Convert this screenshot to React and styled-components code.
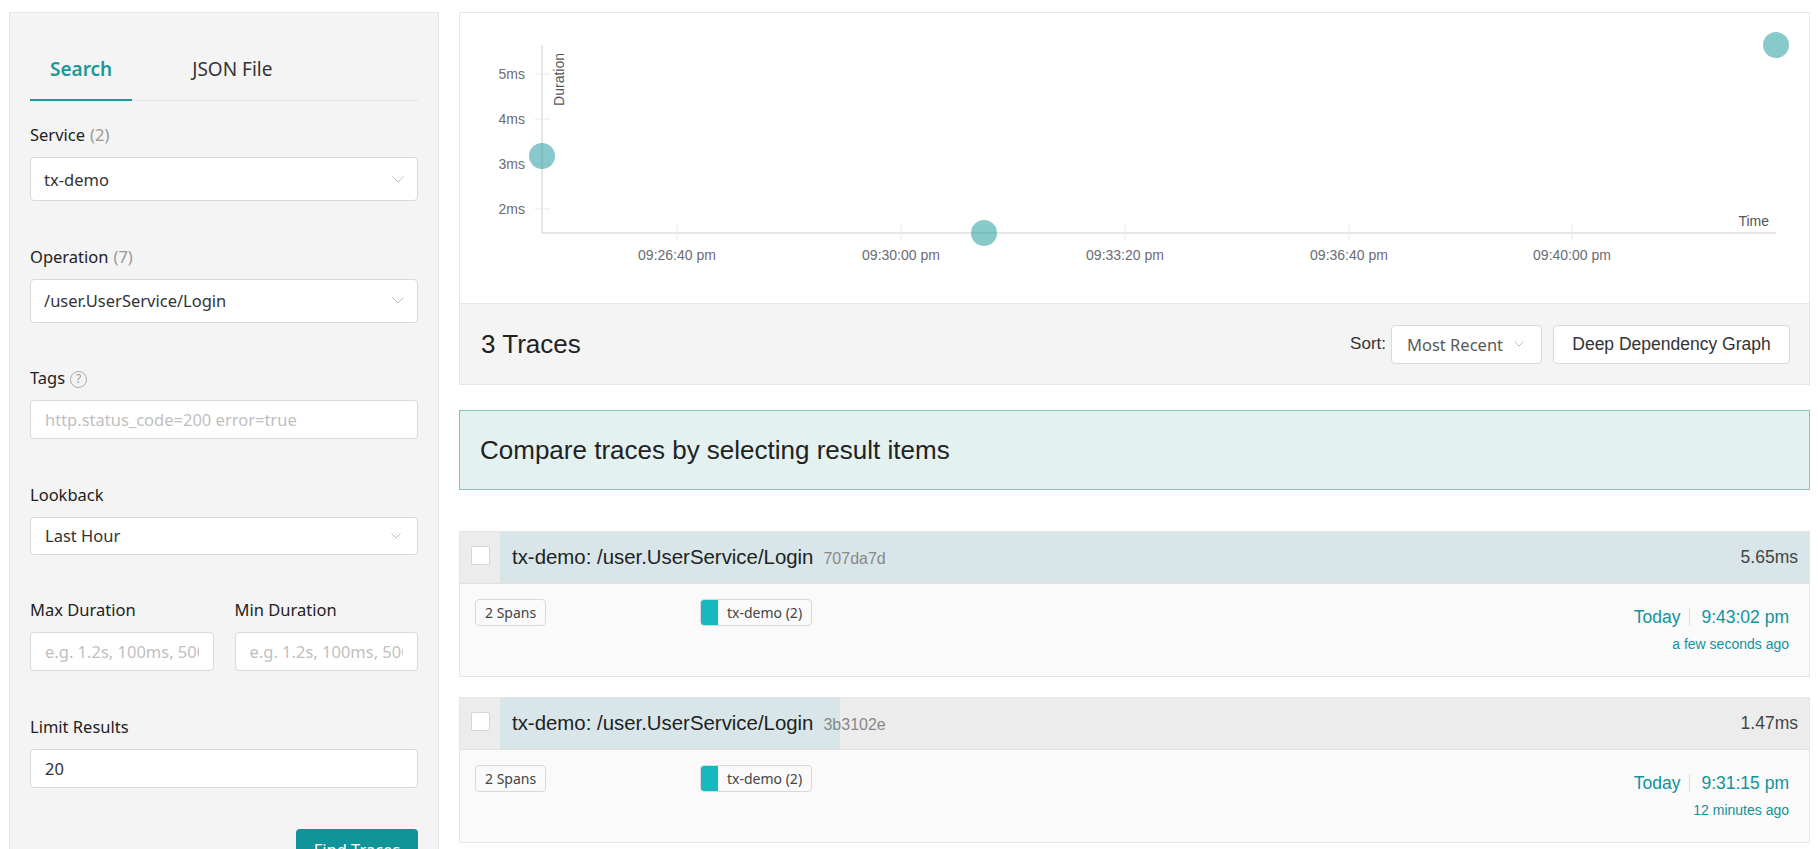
import React from "react";
import styled, { createGlobalStyle } from "styled-components";

const TEAL = "#11939a";
const UI_FONT = `"Noto Sans", "Open Sans", sans-serif`;
const ARIAL = `"Liberation Sans", Arial, sans-serif`;

const GlobalStyle = createGlobalStyle`
  html, body { margin: 0; padding: 0; background: #fff; }
  body { font-family: ${UI_FONT}; color: #222; }
  * { box-sizing: border-box; }
`;

const Page = styled.div`
  display: flex;
  align-items: flex-start;
  gap: 20px;
  padding: 12px 8px 0 9px;
`;

/* ---------- search form ---------- */

const SearchPanel = styled.aside`
  width: 430px;
  flex-shrink: 0;
  background: #f4f4f4;
  border: 1px solid #e6e6e6;
  padding: 24px 20px 24px;
`;

const TabBar = styled.div`
  display: flex;
  gap: 40px;
  border-bottom: 1px solid #e6e6e6;
  margin-bottom: 23px;
`;

const Tab = styled.div`
  padding: 20px 20px 18px;
  margin-bottom: -1px;
  font-size: 19px;
  line-height: 24px;
  font-weight: ${p => (p.active ? 600 : 400)};
  color: ${p => (p.active ? "#199a96" : "#333")};
  border-bottom: 2px solid ${p => (p.active ? "#199a96" : "transparent")};
`;

const FormItem = styled.div`
  margin-bottom: 44.5px;
`;

const Label = styled.div`
  display: flex;
  align-items: center;
  gap: 5px;
  font-size: 16.5px;
  line-height: 22px;
  color: #222;
  margin-bottom: 11px;
`;

const Count = styled.span`
  color: #999;
`;

const HelpIcon = styled.span`
  display: inline-flex;
  align-items: center;
  justify-content: center;
  width: 17px;
  height: 17px;
  border-radius: 50%;
  border: 1px solid #aaa;
  color: #999;
  font-size: 12px;
  line-height: 1;
  margin-top: 2px;
`;

const SelectBox = styled.div`
  height: ${p => p.h}px;
  background: #fff;
  border: 1px solid #d9d9d9;
  border-radius: 4px;
  display: flex;
  align-items: center;
  justify-content: space-between;
  padding: 0 ${p => p.pr}px 0 ${p => p.pl}px;
  font-size: 16.5px;
  color: #333;
`;

const TextInput = styled.input`
  display: block;
  width: 100%;
  height: 39px;
  background: #fff;
  border: 1px solid #d9d9d9;
  border-radius: 4px;
  padding: 0 14px;
  font-family: ${UI_FONT};
  font-size: 16.5px;
  color: #333;
  outline: none;
  &::placeholder { color: #bfbfbf; }
`;

const DurationRow = styled.div`
  display: grid;
  grid-template-columns: 1fr 1fr;
  gap: 21px;
`;

const ButtonRow = styled.div`
  display: flex;
  justify-content: flex-end;
  margin-top: -3px;
`;

const FindButton = styled.button`
  width: 122px;
  height: 40px;
  border: none;
  border-radius: 4px;
  background: ${TEAL};
  color: #fff;
  font-family: ${UI_FONT};
  font-size: 16.5px;
`;

const Chevron = ({ w = 12 }) => (
  <svg width={w} height={w / 2 + 1} viewBox={`0 0 ${w} ${w / 2 + 1}`} fill="none">
    <path d={`M0.5 0.5 L${w / 2} ${w / 2} L${w - 0.5} 0.5`} stroke="#bfbfbf" strokeWidth="1" />
  </svg>
);

/* ---------- results ---------- */

const Main = styled.main`
  flex: 1;
  min-width: 0;
`;

const ResultsBox = styled.section`
  border: 1px solid #e6e6e6;
`;

const ChartArea = styled.div`
  height: 290px;
  background: #fff;
`;

const ChartSvg = styled.svg`
  display: block;
  font-family: ${ARIAL};
`;

const SortBar = styled.div`
  height: 81px;
  border-top: 1px solid #e6e6e6;
  background: #f4f4f4;
  display: flex;
  align-items: center;
  justify-content: space-between;
  padding: 0 19px 0 21px;
`;

const TraceCount = styled.div`
  font-family: ${ARIAL};
  font-size: 26px;
  color: #222;
`;

const SortGroup = styled.div`
  display: flex;
  align-items: center;
`;

const SortLabel = styled.span`
  font-family: ${ARIAL};
  font-size: 17px;
  color: #333;
  margin-right: 5px;
`;

const SortSelect = styled.div`
  width: 151px;
  height: 39px;
  background: #fff;
  border: 1px solid #d9d9d9;
  border-radius: 4px;
  display: flex;
  align-items: center;
  justify-content: space-between;
  padding: 0 17px 0 15px;
  font-size: 16.5px;
  color: #595959;
`;

const GraphButton = styled.button`
  width: 237px;
  height: 39px;
  margin-left: 11px;
  background: #fff;
  border: 1px solid #d9d9d9;
  border-radius: 4px;
  font-family: ${ARIAL};
  font-size: 17.5px;
  color: #333;
`;

const CompareBox = styled.div`
  margin-top: 25px;
  height: 80px;
  background: #e3f1f1;
  border: 1px solid #80c5c5;
  display: flex;
  align-items: center;
  padding-left: 20px;
  font-family: ${ARIAL};
  font-size: 26px;
  color: #222;
`;

const TraceList = styled.div`
  margin-top: 41px;
  display: flex;
  flex-direction: column;
  gap: 20px;
`;

const TraceItem = styled.article`
  border: 1px solid #e6e6e6;
`;

const TraceHeader = styled.div`
  display: flex;
  height: 52px;
  border-bottom: 1px solid #e0e0e0;
`;

const CheckCell = styled.div`
  width: 40px;
  flex-shrink: 0;
  background: #ececec;
  display: flex;
  justify-content: center;
  padding-top: 14px;
`;

const Checkbox = styled.span`
  width: 19px;
  height: 19px;
  background: #fff;
  border: 1px solid #d6d6d6;
  border-radius: 2px;
`;

const TitleBar = styled.div`
  flex: 1;
  display: flex;
  align-items: center;
  justify-content: space-between;
  padding: 0 11px 0 12px;
  background: linear-gradient(to right, #d8e6e9 ${p => p.pct}%, #ececec ${p => p.pct}%);
  font-family: ${ARIAL};
`;

const TraceTitle = styled.div`
  font-size: 20.4px;
  color: #222;
`;

const TraceId = styled.span`
  font-size: 16px;
  color: #888;
  margin-left: 10px;
`;

const Duration = styled.div`
  font-size: 17.5px;
  color: #444;
`;

const TraceBody = styled.div`
  height: 92px;
  padding: 15px 20px 0 15px;
  background: #fafafa;
  display: grid;
  grid-template-columns: 225px 1fr auto;
  align-items: start;
`;

const SpanTag = styled.span`
  justify-self: start;
  display: inline-flex;
  align-items: center;
  height: 27px;
  padding: 0 9px;
  border: 1px solid #d9d9d9;
  border-radius: 4px;
  background: #fafafa;
  font-size: 14px;
  color: #444;
`;

const ServiceTag = styled.span`
  justify-self: start;
  display: inline-flex;
  align-items: center;
  height: 27px;
  border: 1px solid #d9d9d9;
  border-radius: 4px;
  overflow: hidden;
  background: #fafafa;
  font-size: 14px;
  color: #444;
`;

const Swatch = styled.span`
  align-self: stretch;
  width: 17px;
  background: #17b8be;
  margin-right: 9px;
`;

const TagText = styled.span`
  padding-right: 9px;
`;

const TimeCol = styled.div`
  padding-top: 6px;
  text-align: right;
  font-family: ${ARIAL};
  color: ${TEAL};
`;

const TimeLine = styled.div`
  display: flex;
  align-items: center;
  justify-content: flex-end;
  font-size: 17.5px;
  line-height: 24px;
`;

const Sep = styled.span`
  width: 1px;
  height: 18px;
  background: #dcdcdc;
  margin: 0 11px 0 9px;
`;

const RelTime = styled.div`
  font-size: 14px;
  line-height: 20px;
  margin-top: 5px;
`;

/* ---------- data ---------- */

const Y_TICKS = [
  { label: "5ms", y: 61 },
  { label: "4ms", y: 106 },
  { label: "3ms", y: 151 },
  { label: "2ms", y: 196 },
];

const X_TICKS = [
  { label: "09:26:40 pm", x: 217 },
  { label: "09:30:00 pm", x: 441 },
  { label: "09:33:20 pm", x: 665 },
  { label: "09:36:40 pm", x: 889 },
  { label: "09:40:00 pm", x: 1112 },
];

const POINTS = [
  { x: 82, y: 143 },
  { x: 524, y: 220 },
  { x: 1316, y: 32 },
];

const TRACES = [
  { id: "707da7d", duration: "5.65ms", pct: 100, time: "9:43:02 pm", ago: "a few seconds ago" },
  { id: "3b3102e", duration: "1.47ms", pct: 26, time: "9:31:15 pm", ago: "12 minutes ago" },
];

function ScatterPlot() {
  return (
    <ChartSvg width="1349" height="290" viewBox="0 0 1349 290">
      <line x1="82" y1="32" x2="82" y2="221" stroke="#e6e6e6" strokeWidth="2" />
      <line x1="81" y1="220" x2="1316" y2="220" stroke="#e6e6e6" strokeWidth="2" />
      {Y_TICKS.map(t => (
        <g key={t.label}>
          <line x1="75" y1={t.y} x2="90" y2={t.y} stroke="#e6e6e6" />
          <text x="65" y={t.y} textAnchor="end" dominantBaseline="central" fontSize="14" fill="#6b6b76">
            {t.label}
          </text>
        </g>
      ))}
      {X_TICKS.map(t => (
        <g key={t.label}>
          <line x1={t.x} y1="212" x2={t.x} y2="227" stroke="#e6e6e6" />
          <text x={t.x} y="242" textAnchor="middle" dominantBaseline="central" fontSize="14" fill="#6b6b76">
            {t.label}
          </text>
        </g>
      ))}
      <text transform="translate(104 40) rotate(-90)" textAnchor="end" fontSize="14" fill="#555">
        Duration
      </text>
      <text x="1309" y="208" textAnchor="end" dominantBaseline="central" fontSize="14" fill="#555">
        Time
      </text>
      {POINTS.map((p, i) => (
        <circle key={i} cx={p.x} cy={p.y} r="13" fill={TEAL} fillOpacity="0.5" />
      ))}
    </ChartSvg>
  );
}

function TraceRow({ trace }) {
  return (
    <TraceItem>
      <TraceHeader>
        <CheckCell>
          <Checkbox />
        </CheckCell>
        <TitleBar pct={trace.pct}>
          <TraceTitle>
            tx-demo: /user.UserService/Login<TraceId>{trace.id}</TraceId>
          </TraceTitle>
          <Duration>{trace.duration}</Duration>
        </TitleBar>
      </TraceHeader>
      <TraceBody>
        <SpanTag>2 Spans</SpanTag>
        <ServiceTag>
          <Swatch />
          <TagText>tx-demo (2)</TagText>
        </ServiceTag>
        <TimeCol>
          <TimeLine>
            Today<Sep />{trace.time}
          </TimeLine>
          <RelTime>{trace.ago}</RelTime>
        </TimeCol>
      </TraceBody>
    </TraceItem>
  );
}

export default function App() {
  return (
    <>
      <GlobalStyle />
      <Page>
        <SearchPanel>
          <TabBar>
            <Tab active>Search</Tab>
            <Tab>JSON File</Tab>
          </TabBar>

          <FormItem>
            <Label>Service<Count>(2)</Count></Label>
            <SelectBox h={44} pl={13} pr={13}>
              tx-demo
              <Chevron />
            </SelectBox>
          </FormItem>

          <FormItem>
            <Label>Operation<Count>(7)</Count></Label>
            <SelectBox h={44} pl={13} pr={13}>
              /user.UserService/Login
              <Chevron />
            </SelectBox>
          </FormItem>

          <FormItem>
            <Label>Tags<HelpIcon>?</HelpIcon></Label>
            <TextInput placeholder="http.status_code=200 error=true" />
          </FormItem>

          <FormItem>
            <Label>Lookback</Label>
            <SelectBox h={38} pl={14} pr={16}>
              Last Hour
              <Chevron w={10} />
            </SelectBox>
          </FormItem>

          <FormItem>
            <DurationRow>
              <div>
                <Label>Max Duration</Label>
                <TextInput placeholder="e.g. 1.2s, 100ms, 500us" />
              </div>
              <div>
                <Label>Min Duration</Label>
                <TextInput placeholder="e.g. 1.2s, 100ms, 500us" />
              </div>
            </DurationRow>
          </FormItem>

          <FormItem>
            <Label>Limit Results</Label>
            <TextInput defaultValue="20" />
          </FormItem>

          <ButtonRow>
            <FindButton>Find Traces</FindButton>
          </ButtonRow>
        </SearchPanel>

        <Main>
          <ResultsBox>
            <ChartArea>
              <ScatterPlot />
            </ChartArea>
            <SortBar>
              <TraceCount>3 Traces</TraceCount>
              <SortGroup>
                <SortLabel>Sort:</SortLabel>
                <SortSelect>
                  Most Recent
                  <Chevron w={10} />
                </SortSelect>
                <GraphButton>Deep Dependency Graph</GraphButton>
              </SortGroup>
            </SortBar>
          </ResultsBox>

          <CompareBox>Compare traces by selecting result items</CompareBox>

          <TraceList>
            {TRACES.map(t => (
              <TraceRow key={t.id} trace={t} />
            ))}
          </TraceList>
        </Main>
      </Page>
    </>
  );
}
